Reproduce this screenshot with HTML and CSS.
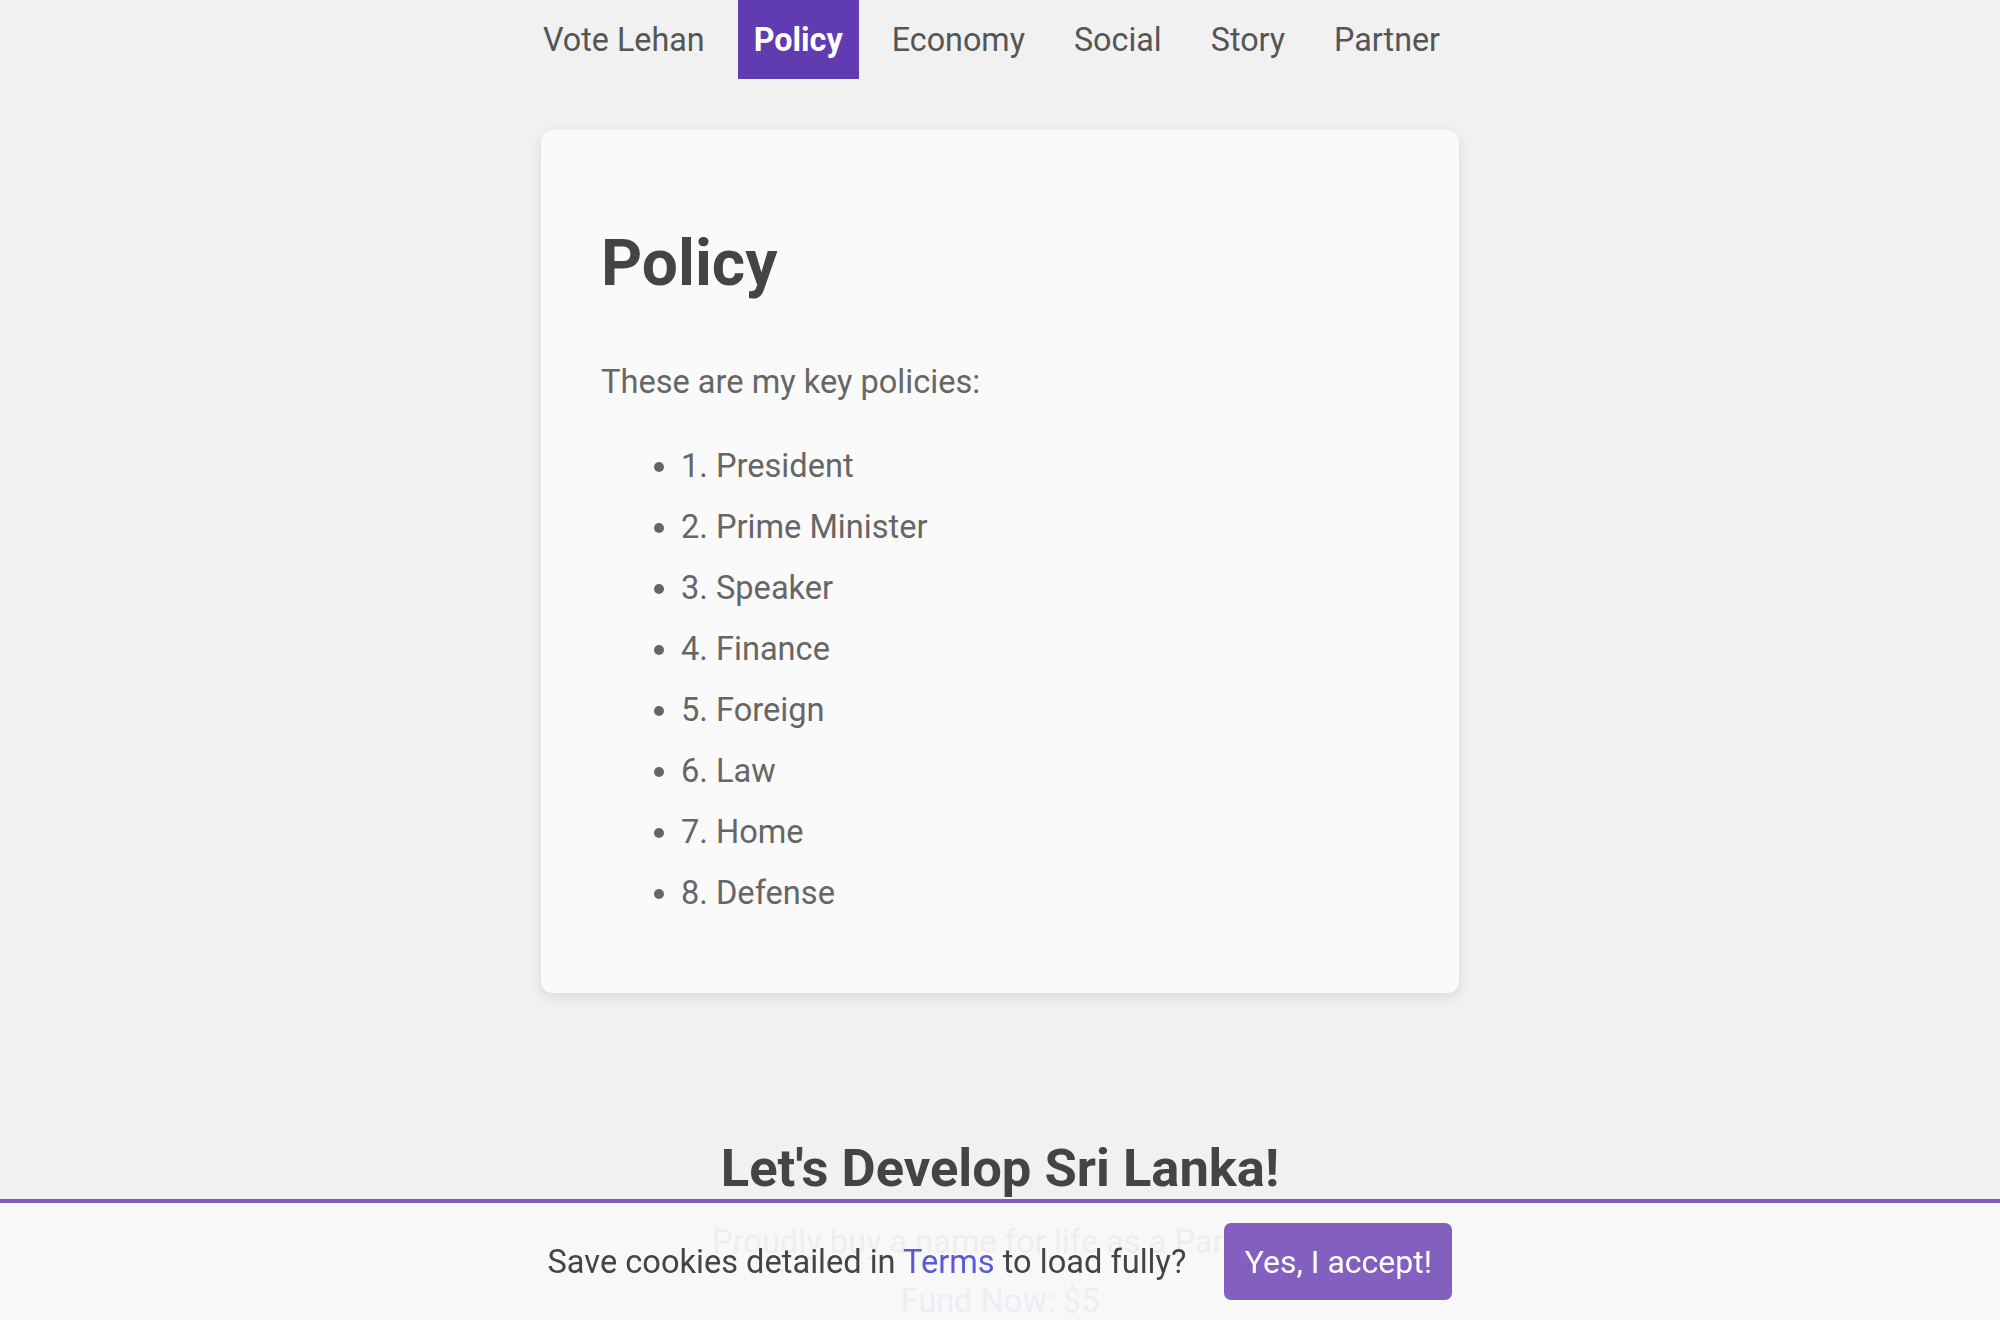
FILE: index.html
```html
<!DOCTYPE html>
<html lang="en">
<head>
<meta charset="utf-8">
<title>Policy - Vote Lehan</title>
<link rel="stylesheet" href="styles.css">
</head>
<body>
<nav class="topnav">
  <ul class="nav-list">
    <li class="nav-item"><a class="nav-link" href="#">Vote Lehan</a></li>
    <li class="nav-item"><a class="nav-link active" href="#">Policy</a></li>
    <li class="nav-item"><a class="nav-link" href="#">Economy</a></li>
    <li class="nav-item"><a class="nav-link" href="#">Social</a></li>
    <li class="nav-item"><a class="nav-link" href="#">Story</a></li>
    <li class="nav-item"><a class="nav-link" href="#">Partner</a></li>
  </ul>
</nav>
<main class="main">
  <section class="card">
    <h1 class="card-title">Policy</h1>
    <p class="card-text">These are my key policies:</p>
    <ul class="policy-list">
      <li>1. President</li>
      <li>2. Prime Minister</li>
      <li>3. Speaker</li>
      <li>4. Finance</li>
      <li>5. Foreign</li>
      <li>6. Law</li>
      <li>7. Home</li>
      <li>8. Defense</li>
    </ul>
  </section>
  <section class="cta">
    <h2 class="cta-title">Let's Develop Sri Lanka!</h2>
    <p class="cta-text">Proudly buy a name for life as a Partner.</p>
    <p class="cta-text"><a class="cta-link" href="#">Fund Now: $5</a></p>
  </section>
</main>
<div class="cookie-bar">
  <span class="cookie-text">Save cookies detailed in <a class="cookie-link" href="#">Terms</a> to load fully?</span>
  <button class="cookie-btn" type="button">Yes, I accept!</button>
</div>
</body>
</html>
```

FILE: styles.css
```css
* { box-sizing: border-box; }
html, body { margin: 0; padding: 0; }
body {
  background: #f1f1f1;
  font-family: Roboto, "Liberation Sans", Arial, sans-serif;
  font-size: 32.6px;
  color: #666;
}
.topnav { display: flex; justify-content: center; }
.nav-list {
  display: flex;
  list-style: none;
  margin: 0;
  padding: 0;
}
.nav-item { margin-right: 17px; }
.nav-link {
  display: block;
  padding: 15.5px 16px;
  font-size: 32.3px;
  line-height: 48px;
  color: #555;
  text-decoration: none;
}
.nav-link.active {
  background: #613bb0;
  color: #fff;
  font-weight: 700;
}
.main {
  display: flex;
  flex-direction: column;
  align-items: center;
  padding-top: 51px;
  padding-bottom: 140px;
}
.card {
  width: 918px;
  background: #fafafa;
  border-radius: 12px;
  box-shadow: 0 4px 14px rgba(0, 0, 0, 0.1);
  padding: 96px 60px 63px;
}
.card-title {
  margin: 0;
  font-size: 64px;
  line-height: 1.2;
  font-weight: 700;
  color: #444;
}
.card-text {
  margin: 55px 0 0;
  line-height: 48px;
}
.policy-list {
  margin: 36px 0 0;
  padding-left: 80px;
}
.policy-list li {
  line-height: 48px;
  margin-bottom: 13px;
}
.cta {
  margin-top: 144px;
  text-align: center;
}
.cta-title {
  margin: 0;
  font-size: 52.5px;
  line-height: 62px;
  font-weight: 700;
  color: #444;
}
.cta-text {
  margin: 19px 0 0;
  line-height: 48px;
}
.cta-text + .cta-text { margin-top: 11.5px; }
.cta-link { color: #6a4bc4; text-decoration: none; }
.cookie-bar {
  position: fixed;
  left: 0;
  right: 0;
  bottom: 0;
  height: 121px;
  border-top: 4px solid #7e5cc0;
  background: rgba(249, 249, 249, 0.93);
  display: flex;
  justify-content: center;
  align-items: center;
  gap: 38px;
}
.cookie-text { color: #444; line-height: 48px; }
.cookie-link { color: #5a5ad8; text-decoration: none; }
.cookie-btn {
  font-family: inherit;
  font-size: 32px;
  line-height: 48px;
  padding: 14.5px 20.5px;
  border: none;
  border-radius: 7px;
  background: #8360c0;
  color: #fff;
  cursor: pointer;
}
```
